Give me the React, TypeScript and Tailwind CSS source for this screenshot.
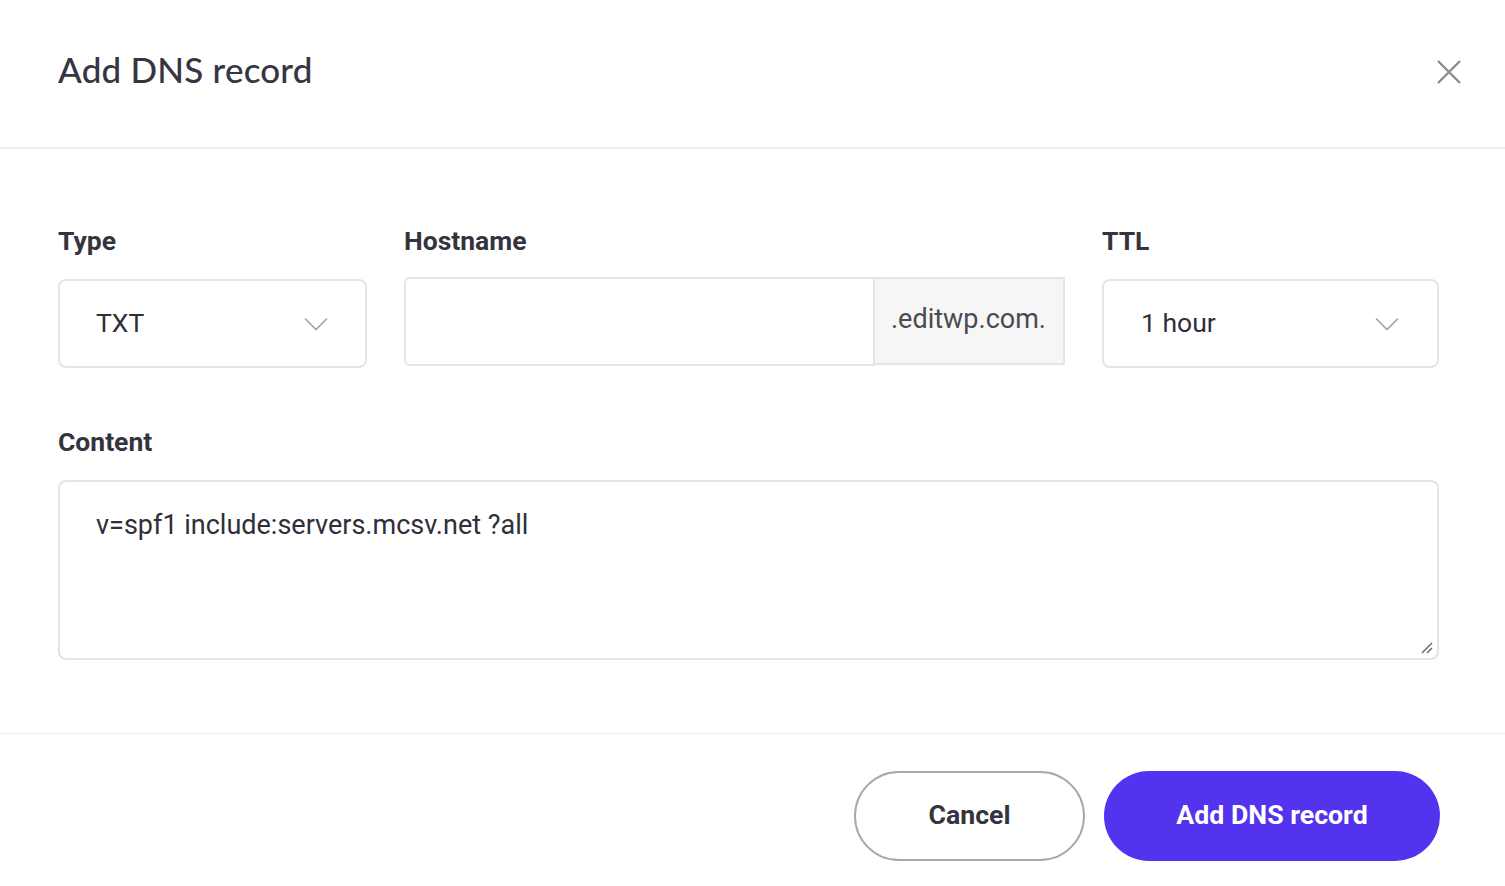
import React from "react";

const Chevron = () => (
  <svg width="24" height="14" viewBox="0 0 24 14" fill="none" className="shrink-0">
    <path d="M1 1.5 L12 12.5 L23 1.5" stroke="#a3a3aa" strokeWidth="1.6" />
  </svg>
);

export default function App() {
  return (
    <div className="w-[1505px] h-[886px] bg-white text-[#34343f] flex flex-col" style={{ fontFamily: "Roboto, 'Liberation Sans', sans-serif" }}>
      <div className="h-[149px] border-b-2 border-[#ececee] flex items-center justify-between pl-[58px] pr-[42px] shrink-0">
        <h1 className="text-[35px] font-medium text-[#363642] tracking-[0.2px] pb-[8px]" style={{ fontFamily: "Lato, 'Open Sans', sans-serif" }}>
          Add DNS record
        </h1>
        <svg width="28" height="28" viewBox="0 0 28 28" className="mb-[3px]">
          <path d="M3 3 L25 25 M25 3 L3 25" stroke="#8a8a90" strokeWidth="2.4" />
        </svg>
      </div>

      <div className="pl-[58px] pr-[66px] pt-[77px] pb-[73px] border-b-[1.5px] border-[#ececee] shrink-0">
        <div className="grid grid-cols-[309px_1fr_337px] gap-x-[37px]">
          <div className="flex flex-col gap-[23px]">
            <label className="text-[26.5px] leading-[30px] font-bold text-[#34343f]">Type</label>
            <div className="h-[89px] border-2 border-[#e4e4e6] rounded-[8px] flex items-center justify-between pl-[36px] pr-[37px]">
              <span className="text-[26.5px] text-[#2f2f39] pb-[2px]">TXT</span>
              <Chevron />
            </div>
          </div>
          <div className="flex flex-col gap-[21px]">
            <label className="text-[26.5px] leading-[30px] font-bold text-[#34343f]">Hostname</label>
            <div className="flex h-[89px]">
              <div className="flex-1 border-2 border-[#e4e4e6] rounded-l-[6px]" />
              <div className="w-[190px] h-[88px] border-2 border-l-0 border-[#e4e4e6] bg-[#f6f6f6] flex items-center pl-[16px] pb-[4px]">
                <span className="text-[27px] text-[#4a4a54]">.editwp.com.</span>
              </div>
            </div>
          </div>
          <div className="flex flex-col gap-[23px]">
            <label className="text-[26.5px] leading-[30px] font-bold text-[#34343f]">TTL</label>
            <div className="h-[89px] border-2 border-[#e4e4e6] rounded-[8px] flex items-center justify-between pl-[37px] pr-[38px]">
              <span className="text-[26.5px] text-[#2f2f39] pb-[2px]">1 hour</span>
              <Chevron />
            </div>
          </div>
        </div>

        <div className="flex flex-col gap-[23px] mt-[59px]">
          <label className="text-[26.5px] leading-[30px] font-bold text-[#34343f]">Content</label>
          <div className="relative h-[180px] border-2 border-[#e4e4e6] rounded-[8px] pl-[36px] pt-[23px]">
            <span className="text-[27px] text-[#2f2f39]">v=spf1 include:servers.mcsv.net ?all</span>
            <svg width="14" height="14" viewBox="0 0 14 14" className="absolute right-[3px] bottom-[3px]">
              <path d="M2 12 L12 2 M7 12 L12 7" stroke="#6a6a70" strokeWidth="1.5" />
            </svg>
          </div>
        </div>
      </div>

      <div className="flex justify-end items-start gap-[19px] pr-[65px] pt-[37px]">
        <button className="w-[231px] h-[90px] rounded-full border-2 border-[#a9a9ad] bg-white text-[26.7px] font-bold text-[#34343f] pb-[2px]">
          Cancel
        </button>
        <button className="w-[336px] h-[90px] rounded-full bg-[#5333ed] text-[26.7px] font-bold text-white pb-[2px]">
          Add DNS record
        </button>
      </div>
    </div>
  );
}
